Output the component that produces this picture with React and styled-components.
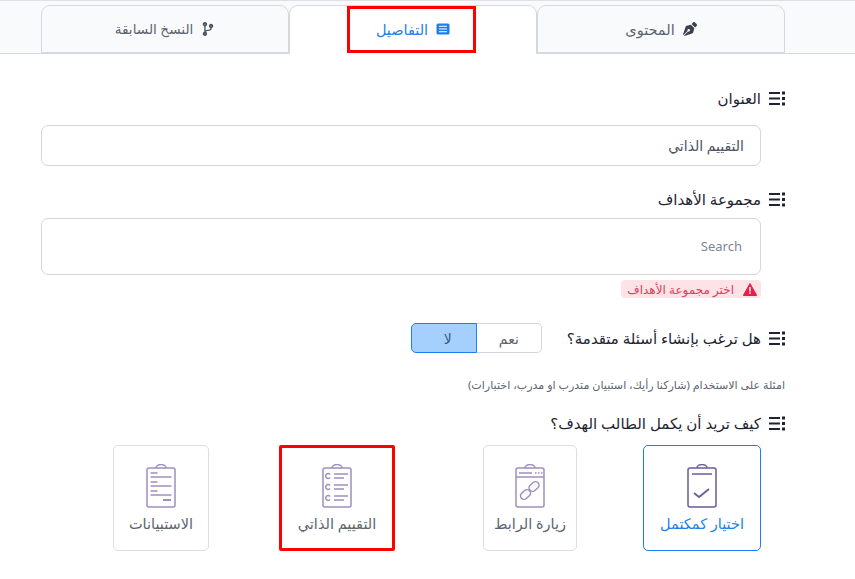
import React from "react";
import styled, { createGlobalStyle } from "styled-components";
import { FaPenNib, FaCodeBranch } from "react-icons/fa";

const Global = createGlobalStyle`
  html, body { margin: 0; padding: 0; background: #fff; }
  body { font-family: "Noto Sans", "DejaVu Sans", sans-serif; color: #1e2433; }
  * { box-sizing: border-box; }
`;

const Page = styled.div`
  width: 855px;
  height: 579px;
  overflow: hidden;
  direction: rtl;
  position: relative;
`;

const TabBar = styled.div`
  display: flex;
  height: 54px;
  padding: 4px 70px 0 41px;
  background: #f9fafc;
  border-top: 1px solid #dfe1e6;
  border-bottom: 1px solid #d6d8de;
`;

const Tab = styled.div`
  position: relative;
  width: 248px;
  height: ${p => (p.$active ? "49px" : "48px")};
  display: flex;
  align-items: center;
  justify-content: center;
  gap: 8px;
  font-size: ${p => p.$size || 14.5}px;
  color: ${p => (p.$active ? "#1b7ff0" : "#5c6470")};
  background: ${p => (p.$active ? "#fff" : "#f9fafc")};
  border: 1px solid #d6d8de;
  border-bottom: ${p => (p.$active ? "none" : "1px solid #d6d8de")};
  border-radius: 9px 9px 0 0;
  padding-bottom: ${p => (p.$active ? "2px" : "1px")};
  svg { flex: none; }
`;

const Annotation = styled.div`
  position: absolute;
  left: 347px;
  top: 6px;
  width: 129px;
  height: 47px;
  border: 3px solid #f00;
`;

const Form = styled.div`
  padding: 34px 70px 0 94px;
`;

const Label = styled.div`
  display: flex;
  align-items: center;
  gap: 8px;
  height: 20px;
  font-size: 15px;
  color: #1e2433;
  white-space: nowrap;
`;

const Field = styled.div`
  display: flex;
  align-items: center;
  width: 720px;
  height: ${p => p.$h}px;
  margin: ${p => p.$top}px 24px 0 0;
  padding: 0 ${p => (p.$small ? 18 : 16)}px ${p => (p.$small ? 2 : 0)}px;
  border: 1px solid #d4d5de;
  border-radius: 7px;
  font-size: ${p => (p.$small ? 13 : 14)}px;
  color: ${p => (p.$small ? "#7b8794" : "#4a5361")};
`;

const Spaced = styled.div`
  margin-top: ${p => p.$top}px;
`;

const ErrorBadge = styled.div`
  display: flex;
  align-items: center;
  gap: 9px;
  width: 140px;
  height: 18px;
  margin: 5px 24px 0 0;
  padding: 0 4px;
  border-radius: 4px;
  background: #fde3e6;
  color: #dc3d5b;
  font-size: 12px;
  white-space: nowrap;
`;

const QuestionRow = styled.div`
  display: flex;
  align-items: center;
  gap: 25px;
  height: 30px;
  margin-top: 25px;
`;

const Toggle = styled.div`
  display: flex;
  width: 131px;
  height: 30px;
`;

const ToggleOption = styled.div`
  flex: ${p => (p.$active ? "0 0 66px" : "0 0 65px")};
  display: flex;
  align-items: center;
  justify-content: center;
  font-size: 14px;
  color: ${p => (p.$active ? "#3c5a7d" : "#5c6470")};
  background: ${p => (p.$active ? "#a5d0fd" : "#fff")};
  border: 1px solid ${p => (p.$active ? "#1b7ff0" : "#d4d5de")};
  border-radius: ${p => (p.$active ? "5px 0 0 5px" : "0 5px 5px 0")};
  ${p => p.$active && "padding-left: 8px;"}
  ${p => !p.$active && "border-left: none;"}
`;

const Hint = styled.div`
  margin-top: 23px;
  font-size: 11.1px;
  line-height: 18px;
  color: #5c6470;
  white-space: nowrap;
`;

const Cards = styled.div`
  display: flex;
  margin: 12px 24px 0 0;
`;

const Card = styled.div`
  width: ${p => p.$w}px;
  height: 106px;
  margin-left: ${p => p.$gap || 0}px;
  flex: none;
  display: flex;
  flex-direction: column;
  align-items: center;
  padding-top: ${p => (p.$marked ? 16 : 18)}px;
  gap: 5px;
  font-size: 14.5px;
  white-space: nowrap;
  color: ${p => (p.$active ? "#1b7ff0" : "#5c6470")};
  border: ${p => (p.$marked ? "3px solid #f00" : p.$active ? "1px solid #1b7ff0" : "1px solid #dddee4")};
  border-radius: ${p => (p.$marked ? "2px" : "5px")};
`;

const LinesSvg = styled.svg`
  flex: none;
`;

const Lines = () => (
  <LinesSvg width="16" height="15" viewBox="0 0 16 15" fill="#1e2433">
    <rect x="0" y="1" width="11" height="2" />
    <rect x="0" y="6.5" width="11" height="2" />
    <rect x="0" y="12" width="11" height="2" />
    <rect x="13" y="0.5" width="3" height="3" />
    <rect x="13" y="6" width="3" height="3" />
    <rect x="13" y="11.5" width="3" height="3" />
  </LinesSvg>
);

const ListBox = () => (
  <svg width="14" height="14" viewBox="0 0 14 14">
    <rect x="0.5" y="1.5" width="13" height="11" rx="1.5" fill="#1b7ff0" />
    <rect x="3" y="3.7" width="8" height="1.3" fill="#cfe4ff" />
    <rect x="3" y="6.3" width="8" height="1.3" fill="#cfe4ff" />
    <rect x="3" y="9" width="8" height="1.3" fill="#cfe4ff" />
  </svg>
);

const Warn = () => (
  <svg width="14" height="13" viewBox="0 0 14 13">
    <path d="M7 .5 13.7 12.5H.3z" fill="#e41f4d" stroke="#e41f4d" strokeLinejoin="round" />
    <rect x="6.2" y="4" width="1.6" height="4.6" fill="#fde3e6" />
    <rect x="6.2" y="9.4" width="1.6" height="1.6" fill="#fde3e6" />
  </svg>
);

const Clip = ({ children, color = "#9f8fc0" }) => (
  <svg width="30" height="44" viewBox="0 0 30 44" fill="none" stroke={color} strokeWidth="1.5">
    <path d="M10 4a5 3.4 0 0 1 10 0" />
    <rect x="1" y="4" width="28" height="39" rx="2" />
    {children}
  </svg>
);

export default function App() {
  return (
    <Page>
      <Global />
      <TabBar>
        <Tab><FaPenNib size={14} color="#3a404c" />المحتوى</Tab>
        <Tab $active><ListBox />التفاصيل</Tab>
        <Tab $size={13.6}><FaCodeBranch size={14} color="#4a505c" />النسخ السابقة</Tab>
      </TabBar>
      <Annotation />
      <Form>
        <Label><Lines />العنوان</Label>
        <Field $h={41} $top={17}>التقييم الذاتي</Field>
        <Spaced $top={23}><Label><Lines />مجموعة الأهداف</Label></Spaced>
        <Field $h={57} $top={9} $small>Search</Field>
        <ErrorBadge><Warn />اختر مجموعة الأهداف</ErrorBadge>
        <QuestionRow>
          <Label><Lines />هل ترغب بإنشاء أسئلة متقدمة؟</Label>
          <Toggle>
            <ToggleOption>نعم</ToggleOption>
            <ToggleOption $active>لا</ToggleOption>
          </Toggle>
        </QuestionRow>
        <Hint>امثلة على الاستخدام (شاركنا رأيك، استبيان متدرب او مدرب، اختبارات)</Hint>
        <Spaced $top={19}><Label><Lines />كيف تريد أن يكمل الطالب الهدف؟</Label></Spaced>
        <Cards>
          <Card $w={118} $gap={66} $active>
            <Clip color="#6f5a9c">
              <path d="M5 10h20" />
              <path d="M7 29l5 4 10-8" strokeWidth="1.8" />
            </Clip>
            اختيار كمكتمل
          </Card>
          <Card $w={94} $gap={88}>
            <Clip>
              <path d="M4 9h13M20 9h1.5M23 9h1.5M26 9h1.5" />
              <path d="M1 13h28" />
              <rect x="5" y="27" width="11" height="7" rx="3.5" transform="rotate(-42 10.5 30.5)" />
              <rect x="13.5" y="19" width="11" height="7" rx="3.5" transform="rotate(-42 19 22.5)" />
            </Clip>
            زيارة الرابط
          </Card>
          <Card $w={116} $gap={70} $marked>
            <Clip>
              <path d="M8 10.5a2.4 2.4 0 1 0 0 3M8 21.5a2.4 2.4 0 1 0 0 3M8 32.5a2.4 2.4 0 1 0 0 3" />
              <path d="M12 10h14M12 14h10M12 21h14M12 25h10M12 32h14M12 36h10" />
            </Clip>
            التقييم الذاتي
          </Card>
          <Card $w={96}>
            <Clip>
              <path d="M4.5 9h7M4.5 13h21M4.5 18h7M4.5 22h21M4.5 27h7M4.5 31h21" />
              <path d="M17 36h8" strokeWidth="2" />
            </Clip>
            الاستبيانات
          </Card>
        </Cards>
      </Form>
    </Page>
  );
}
